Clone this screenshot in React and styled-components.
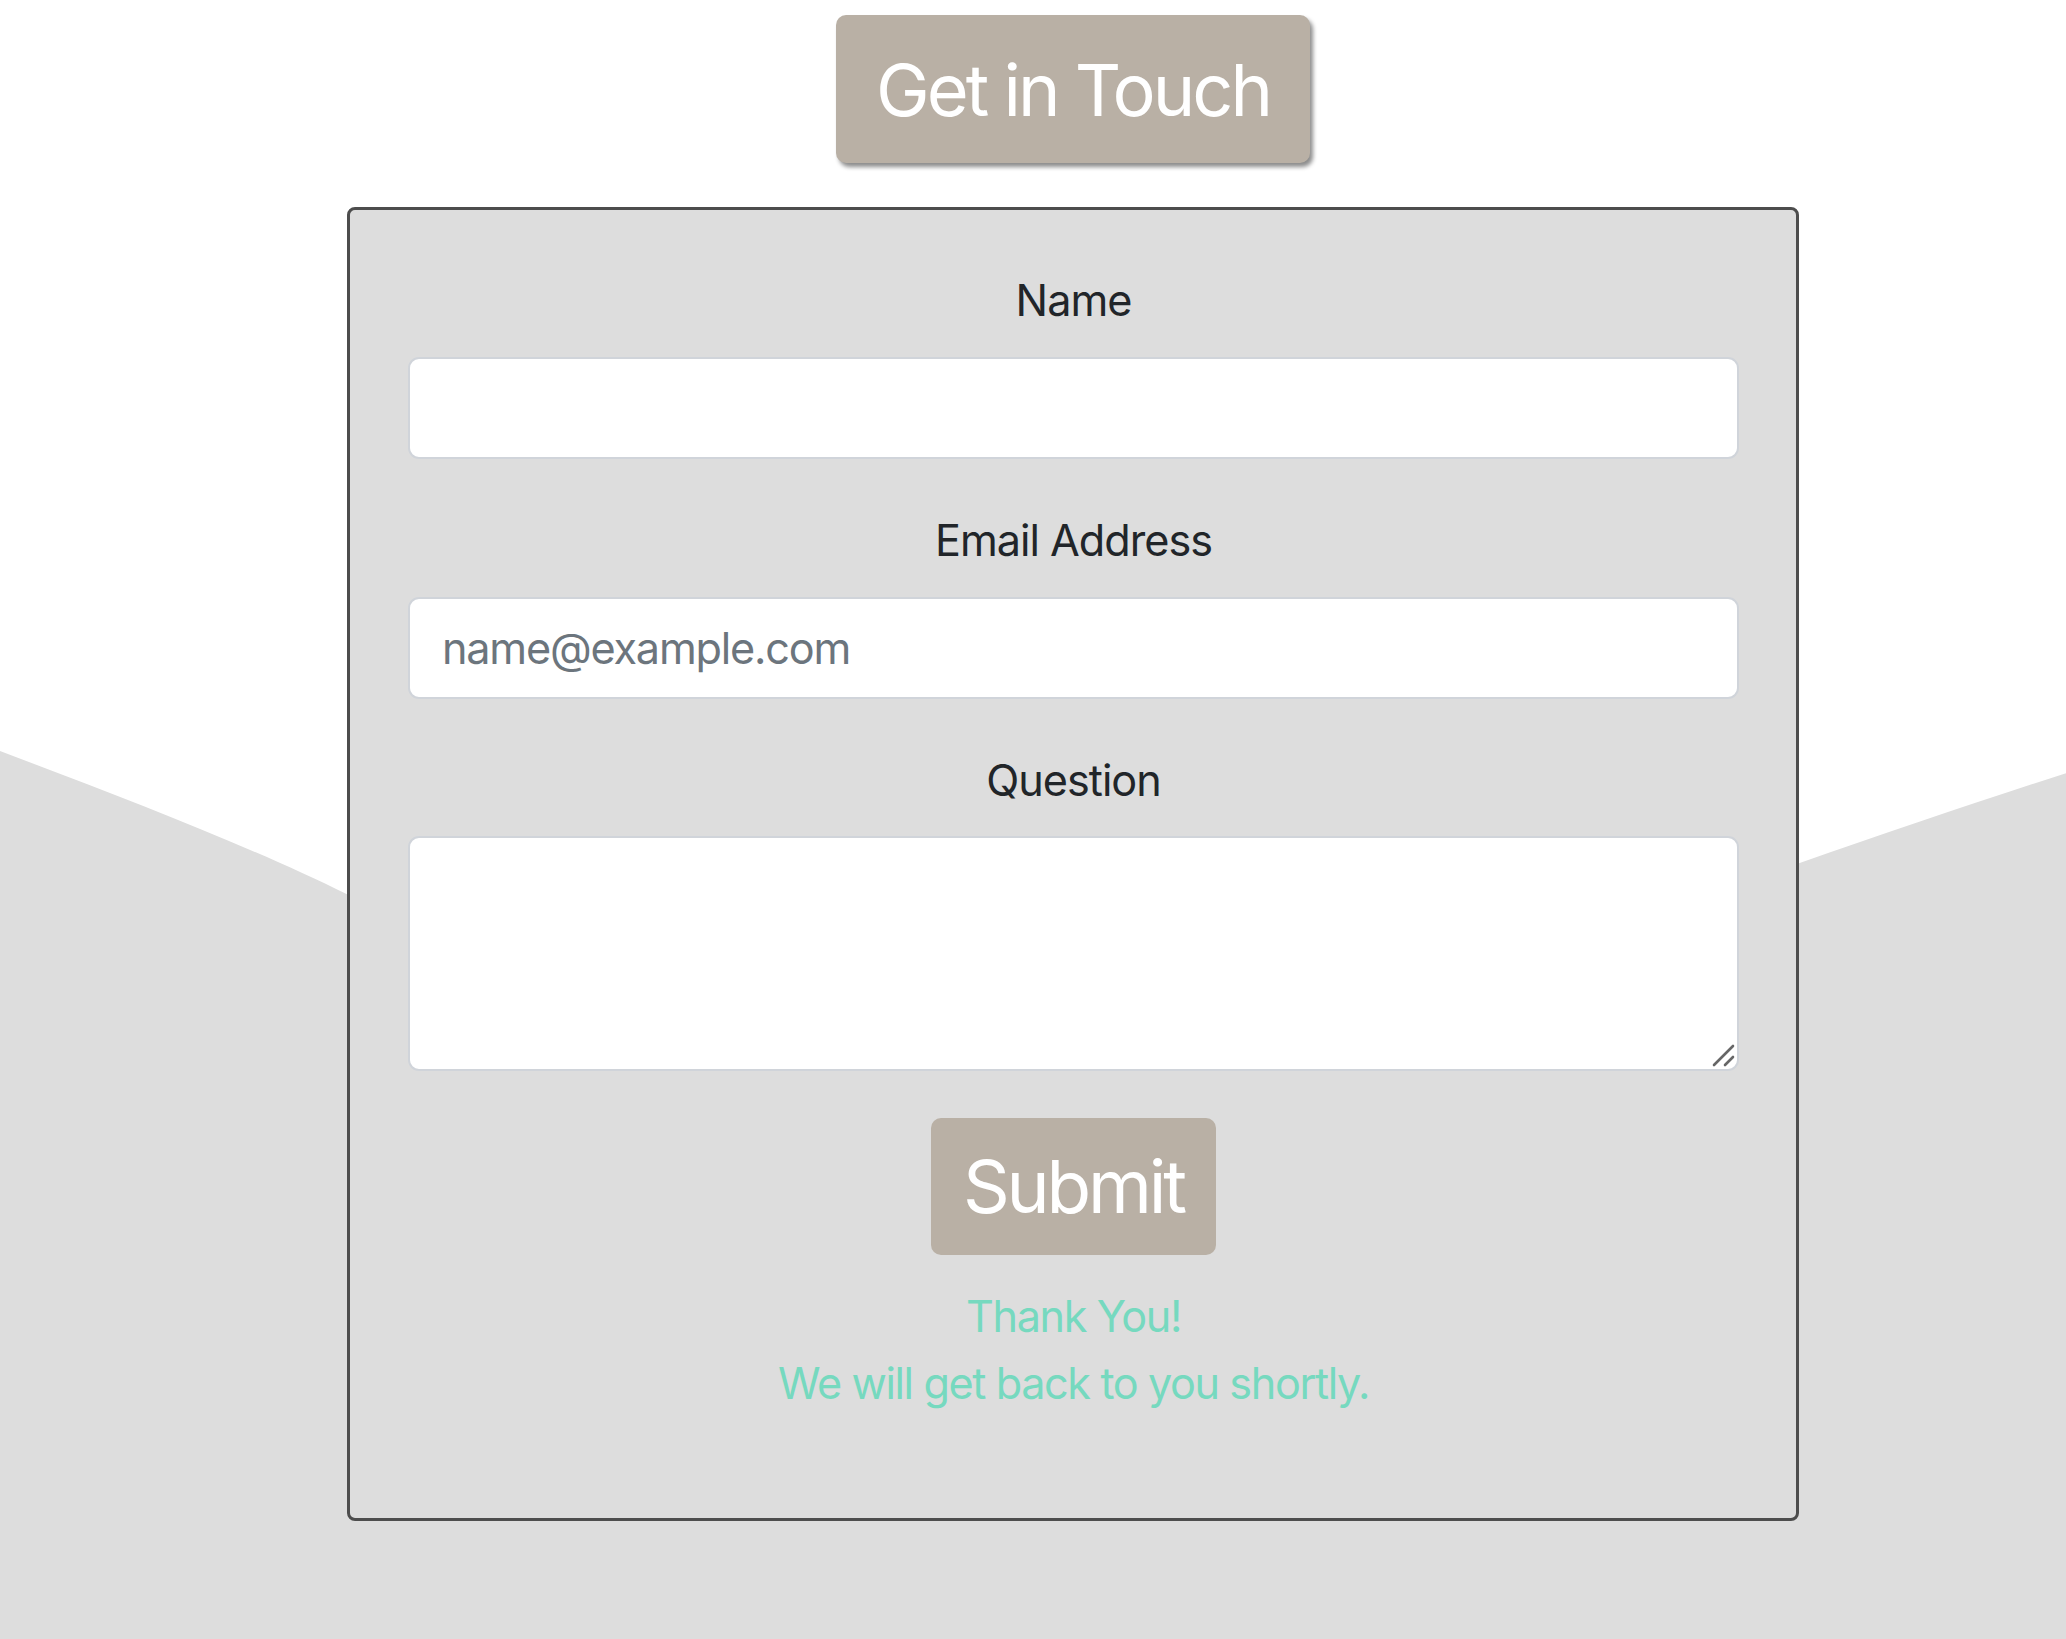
import React from "react";
import styled, { createGlobalStyle } from "styled-components";

const GlobalStyle = createGlobalStyle`
  html, body {
    margin: 0;
    padding: 0;
    background: #ffffff;
  }
  body {
    font-family: Inter, "Noto Sans", "Liberation Sans", sans-serif;
    color: #212529;
  }
  * { box-sizing: border-box; }
`;

const Page = styled.div`
  position: relative;
  min-height: 100vh;
  padding: 15px 0 120px 80px;
  display: flex;
  flex-direction: column;
  align-items: center;
  overflow: hidden;
`;

const Wave = styled.svg`
  position: absolute;
  left: 0;
  top: 0;
  width: 100%;
  height: 100%;
  z-index: 0;
`;

const Title = styled.h1`
  position: relative;
  z-index: 1;
  margin: 0 0 44px;
  width: 474px;
  height: 148px;
  display: flex;
  align-items: center;
  justify-content: center;
  background: #b9b0a5;
  color: #ffffff;
  font-family: Inter, "Noto Sans", sans-serif;
  font-weight: 400;
  font-size: 72px;
  letter-spacing: -3px;
  border-radius: 10px;
  box-shadow: 3px 4px 4px rgba(0, 0, 0, 0.45);
`;

const Panel = styled.form`
  position: relative;
  z-index: 1;
  width: 1452px;
  background: #dddddd;
  border: 3px solid #4d4d4d;
  border-radius: 8px;
  padding: 58px 57px 101px 58px;
  display: flex;
  flex-direction: column;
`;

const Field = styled.div`
  display: flex;
  flex-direction: column;
  margin-bottom: ${(p) => p.$gap}px;
`;

const Label = styled.label`
  display: block;
  text-align: center;
  font-size: 43.2px;
  line-height: 64.8px;
  letter-spacing: -1px;
  color: #212529;
  margin-bottom: 24px;
`;

const inputBase = `
  width: 100%;
  background: #ffffff;
  border: 2.5px solid #d0d4da;
  border-radius: 11px;
  padding: 16px 32px;
  font-family: Inter, "Noto Sans", sans-serif;
  font-size: 43.2px;
  letter-spacing: -1.2px;
  color: #495057;
  outline: none;
  &::placeholder { color: #6c757d; opacity: 1; }
`;

const Input = styled.input`
  ${inputBase}
  height: 102px;
`;

const AreaWrap = styled.div`
  position: relative;
`;

const TextArea = styled.textarea`
  ${inputBase}
  height: 235px;
  resize: none;
  display: block;
`;

const Grip = styled.svg`
  position: absolute;
  right: 3px;
  bottom: 3px;
  width: 24px;
  height: 24px;
  pointer-events: none;
`;

const SubmitButton = styled.button`
  align-self: center;
  width: 285px;
  height: 137px;
  border: none;
  border-radius: 10px;
  background: #b9b0a5;
  color: #ffffff;
  font-family: Inter, "Noto Sans", sans-serif;
  font-size: 73px;
  letter-spacing: -3.2px;
  margin-bottom: 28px;
  cursor: pointer;
`;

const Thanks = styled.p`
  margin: 0;
  text-align: center;
  color: #76d9bf;
  font-size: 43.2px;
  line-height: 67px;
  letter-spacing: -1.4px;
`;

export default function App() {
  return (
    <>
      <GlobalStyle />
      <Page>
        <Wave viewBox="0 0 2066 1639" preserveAspectRatio="none" aria-hidden="true">
          <path
            d="M0 750 C120 795 250 845 347 893 L1073 1100 L1799 862 C1890 830 1980 800 2066 772 L2066 1639 L0 1639 Z"
            fill="#dddddd"
          />
        </Wave>
        <Title>Get in Touch</Title>
        <Panel onSubmit={(e) => e.preventDefault()}>
          <Field $gap={49}>
            <Label htmlFor="name">Name</Label>
            <Input id="name" type="text" />
          </Field>
          <Field $gap={49}>
            <Label htmlFor="email">Email Address</Label>
            <Input id="email" type="email" placeholder="name@example.com" />
          </Field>
          <Field $gap={47}>
            <Label htmlFor="question">Question</Label>
            <AreaWrap>
              <TextArea id="question" />
              <Grip viewBox="0 0 24 24" aria-hidden="true">
                <line x1="2" y1="21" x2="21" y2="2" stroke="#666" strokeWidth="2.6" strokeLinecap="round" />
                <line x1="13" y1="21" x2="21" y2="13" stroke="#666" strokeWidth="2.6" strokeLinecap="round" />
              </Grip>
            </AreaWrap>
          </Field>
          <SubmitButton type="submit">Submit</SubmitButton>
          <Thanks>
            Thank You!
            <br />
            We will get back to you shortly.
          </Thanks>
        </Panel>
      </Page>
    </>
  );
}
